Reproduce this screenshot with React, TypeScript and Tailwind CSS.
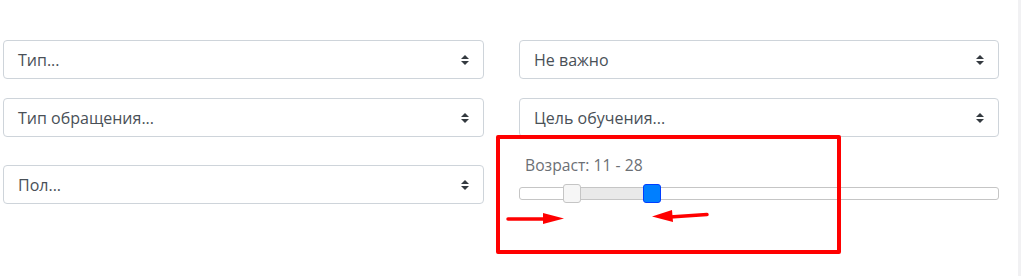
import React from 'react';

function Chevron() {
  return (
    <svg width="8" height="10" viewBox="0 0 4 5" className="shrink-0">
      <path d="M2 0L0 2h4zm0 5L0 3h4z" fill="#343a40" />
    </svg>
  );
}

function FakeSelect({ label, className = '' }: { label: string; className?: string }) {
  return (
    <div
      className={`flex h-[39px] items-center justify-between rounded-[4px] border border-[#ced4da] bg-white pl-[14px] pr-[14px] text-[16px] text-[#495057] ${className}`}
    >
      <span className="leading-none">{label}</span>
      <Chevron />
    </div>
  );
}

function RangeSlider() {
  // track spans 519..999, handles at 11 and 28
  return (
    <div className="relative h-[13px] rounded-[3px] border border-[#c5c5c5] bg-white">
      <div className="absolute top-0 bottom-0 left-[53px] w-[80px] bg-[#e9e9e9]" />
      <div className="absolute top-[-4px] left-[43px] h-[19px] w-[18px] rounded-[3px] border border-[#c5c5c5] bg-[#f6f6f6]" />
      <div className="absolute top-[-4px] left-[123px] h-[19px] w-[18px] rounded-[3px] border border-[#003eff] bg-[#007fff]" />
    </div>
  );
}

export default function App() {
  return (
    <div
      className="relative flex h-[276px] w-[1021px] overflow-hidden bg-white"
      style={{ fontFamily: '"Open Sans", "Noto Sans", sans-serif' }}
    >
      <div className="ml-[3px] flex w-[481px] flex-col">
        <FakeSelect label="Тип..." className="mt-[40px]" />
        <FakeSelect label="Тип обращения..." className="mt-[19px]" />
        <FakeSelect label="Пол..." className="mt-[28px]" />
      </div>

      <div className="ml-[35px] flex w-[480px] flex-col">
        <FakeSelect label="Не важно" className="mt-[40px]" />
        <FakeSelect label="Цель обучения..." className="mt-[19px]" />
        <div className="mt-[17px] pl-[6px] text-[15.7px] leading-[23px] text-[#6c7075]">Возраст: 11 - 28</div>
        <div className="mt-[10px]">
          <RangeSlider />
        </div>
      </div>

      <div className="ml-auto w-[3px] bg-[#f1f1f3]" />

      {/* annotation overlay */}
      <div className="pointer-events-none absolute top-[135px] left-[496px] h-[119px] w-[345px] rounded-[2px] border-[4px] border-[#ff0000]" />
      <svg className="pointer-events-none absolute top-0 left-0" width="1021" height="276">
        <line x1="508" y1="219" x2="545" y2="219" stroke="#ff0000" strokeWidth="3.5" strokeLinecap="round" />
        <polygon points="543,213 564,218.5 543,224" fill="#ff0000" />
        <line x1="670" y1="217" x2="707" y2="214.5" stroke="#ff0000" strokeWidth="3.5" strokeLinecap="round" />
        <polygon points="672,210 652,216.5 673,222" fill="#ff0000" />
      </svg>
    </div>
  );
}
